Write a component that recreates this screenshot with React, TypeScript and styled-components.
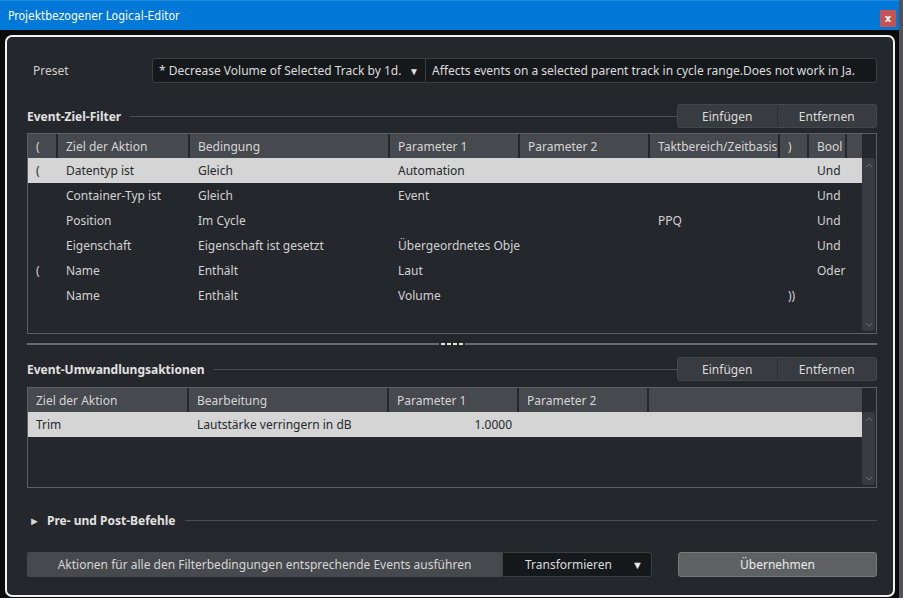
import React from "react";
import styled, { createGlobalStyle } from "styled-components";

const GlobalStyle = createGlobalStyle`
  html, body {
    margin: 0;
    padding: 0;
    background: #4f5358;
  }
  body {
    font-family: "Noto Sans", "Open Sans", sans-serif;
    font-size: 12px;
    color: #d2d2d2;
  }
`;

const filterCols = [30, 132, 200, 130, 130, 130, 29, 38, 15];
const actionCols = [161, 200, 130, 130, 213];

const filterHeader = ["(", "Ziel der Aktion", "Bedingung", "Parameter 1", "Parameter 2", "Taktbereich/Zeitbasis", ")", "Bool", ""];
const filterRows = [
  ["(", "Datentyp ist", "Gleich", "Automation", "", "", "", "Und", ""],
  ["", "Container-Typ ist", "Gleich", "Event", "", "", "", "Und", ""],
  ["", "Position", "Im Cycle", "", "", "PPQ", "", "Und", ""],
  ["", "Eigenschaft", "Eigenschaft ist gesetzt", "Übergeordnetes Objekt", "", "", "", "Und", ""],
  ["(", "Name", "Enthält", "Laut", "", "", "", "Oder", ""],
  ["", "Name", "Enthält", "Volume", "", "", "))", "", ""],
  ["", "", "", "", "", "", "", "", ""],
];

const actionHeader = ["Ziel der Aktion", "Bearbeitung", "Parameter 1", "Parameter 2", ""];
const actionRows = [
  ["Trim", "Lautstärke verringern in dB", "1.0000", "", ""],
  ["", "", "", "", ""],
  ["", "", "", "", ""],
];

function Chevron({ up }: { up?: boolean }) {
  return (
    <svg width="8" height="5" viewBox="0 0 8 5">
      <path d={up ? "M1 4 L4 1 L7 4" : "M1 1 L4 4 L7 1"} stroke="#6d7074" strokeWidth="1" fill="none" />
    </svg>
  );
}

function DataTable({
  cols,
  header,
  rows,
  selected,
  alignRight = [],
}: {
  cols: number[];
  header: string[];
  rows: string[][];
  selected: number;
  alignRight?: number[];
}) {
  const template = cols.map((c) => `${c}px`).join(" ");
  return (
    <TableFrame>
      <TableGrid>
        <Row $cols={template}>
          {header.map((h, i) => (
            <HeadCell key={i} $last={i === header.length - 1}>
              {h}
            </HeadCell>
          ))}
        </Row>
        {rows.map((r, ri) => (
          <Row key={ri} $cols={template} $selected={ri === selected}>
            {r.map((c, ci) => (
              <Cell key={ci} $right={alignRight.includes(ci)}>
                {c}
              </Cell>
            ))}
          </Row>
        ))}
      </TableGrid>
      <ScrollColumn>
        <ScrollHead />
        <ScrollTrack>
          <Chevron up />
          <Chevron />
        </ScrollTrack>
      </ScrollColumn>
    </TableFrame>
  );
}

function SectionHeader({ title }: { title: string }) {
  return (
    <SectionRow>
      <SectionTitle>{title}</SectionTitle>
      <SectionLine />
      <ButtonGroup>
        <GroupButton>Einfügen</GroupButton>
        <GroupButton>Entfernen</GroupButton>
      </ButtonGroup>
    </SectionRow>
  );
}

export default function App() {
  return (
    <Screen>
      <GlobalStyle />
      <Window>
        <TitleBar>
          <TitleText>Projektbezogener Logical-Editor</TitleText>
          <CloseButton>x</CloseButton>
        </TitleBar>
        <Body>
          <Panel>
            <PresetRow>
              <PresetLabel>Preset</PresetLabel>
              <PresetSelect>
                <span>* Decrease Volume of Selected Track by 1d.</span>
                <Arrow>▼</Arrow>
              </PresetSelect>
              <PresetInfo>Affects events on a selected parent track in cycle range.Does not work in Ja.</PresetInfo>
            </PresetRow>

            <Block $top={21}>
              <SectionHeader title="Event-Ziel-Filter" />
            </Block>
            <Block $top={5}>
              <DataTable cols={filterCols} header={filterHeader} rows={filterRows} selected={0} />
            </Block>

            <Splitter>
              <SplitLine />
              <Grip>
                <i />
                <i />
                <i />
                <i />
              </Grip>
              <SplitLine />
            </Splitter>

            <Block $top={11}>
              <SectionHeader title="Event-Umwandlungsaktionen" />
            </Block>
            <Block $top={6}>
              <DataTable cols={actionCols} header={actionHeader} rows={actionRows} selected={0} alignRight={[2]} />
            </Block>

            <PrePostRow>
              <Triangle>►</Triangle>
              <SectionTitle>Pre- und Post-Befehle</SectionTitle>
              <SectionLine />
            </PrePostRow>

            <BottomRow>
              <ActionLabel>Aktionen für alle den Filterbedingungen entsprechende Events ausführen</ActionLabel>
              <ModeSelect>
                <span>Transformieren</span>
                <ModeArrow>▼</ModeArrow>
              </ModeSelect>
              <ApplyButton>Übernehmen</ApplyButton>
            </BottomRow>
          </Panel>
        </Body>
      </Window>
    </Screen>
  );
}

const Screen = styled.div`
  width: 903px;
  height: 598px;
  display: flex;
  overflow: hidden;
  background: #4f5358;
`;

const Window = styled.div`
  width: 899px;
  height: 598px;
  display: flex;
  flex-direction: column;
  background: #0b0b0c;
`;

const TitleBar = styled.div`
  height: 30px;
  flex: none;
  box-sizing: border-box;
  background: #0078d7;
  border-top: 1px solid #1e88e0;
  display: flex;
  align-items: center;
  justify-content: space-between;
  padding: 0 3px 0 8px;
`;

const TitleText = styled.div`
  font-family: "DejaVu Sans Condensed", "DejaVu Sans", sans-serif;
  font-stretch: condensed;
  font-size: 12px;
  color: #ffffff;
  margin-top: 1px;
`;

const CloseButton = styled.div`
  width: 16px;
  height: 17px;
  margin-top: 5px;
  background: #c75252;
  color: #ffffff;
  font-family: "DejaVu Sans", sans-serif;
  font-size: 10px;
  font-weight: bold;
  display: flex;
  align-items: center;
  justify-content: center;
`;

const Body = styled.div`
  flex: 1;
  padding: 5px 4px 1px 5px;
  display: flex;
`;

const Panel = styled.div`
  flex: 1;
  box-sizing: border-box;
  border: 2px solid #f2f2f2;
  border-radius: 7px;
  background: #24272b;
  padding: 21px 16px 0 20px;
  display: flex;
  flex-direction: column;
`;

const PresetRow = styled.div`
  height: 25px;
  display: flex;
  align-items: stretch;
`;

const PresetLabel = styled.div`
  width: 125px;
  box-sizing: border-box;
  padding-left: 6px;
  display: flex;
  align-items: center;
  color: #cfcfcf;
`;

const Field = styled.div`
  box-sizing: border-box;
  background: #16191c;
  border: 1px solid #3b3e42;
  display: flex;
  align-items: center;
  color: #dcdcdc;
  white-space: nowrap;
  overflow: hidden;
`;

const PresetSelect = styled(Field)`
  width: 274px;
  border-radius: 3px 0 0 3px;
  padding: 0 6px;
  justify-content: space-between;
`;

const Arrow = styled.span`
  font-size: 10px;
  color: #e0e0e0;
`;

const PresetInfo = styled(Field)`
  flex: 1;
  border-left: none;
  border-radius: 0 3px 3px 0;
  padding: 0 6px;
`;

const Block = styled.div<{ $top: number }>`
  margin-top: ${(p) => p.$top}px;
`;

const SectionRow = styled.div`
  height: 24px;
  display: flex;
  align-items: center;
`;

const SectionTitle = styled.div`
  font-weight: bold;
  color: #e2e2e2;
  white-space: nowrap;
`;

const SectionLine = styled.div`
  flex: 1;
  height: 1px;
  background: #4b4e52;
  margin-left: 9px;
`;

const ButtonGroup = styled.div`
  width: 200px;
  height: 24px;
  display: flex;
  box-sizing: border-box;
  border: 1px solid #44474b;
  border-radius: 3px;
  background: #383b3f;
  overflow: hidden;
`;

const GroupButton = styled.div`
  flex: 1;
  display: flex;
  align-items: center;
  justify-content: center;
  color: #dcdcdc;
  & + & {
    border-left: 1px solid #2b2e31;
  }
`;

const TableFrame = styled.div`
  display: flex;
  border: 1px solid #5c5f63;
  background: #24272b;
`;

const TableGrid = styled.div`
  display: flex;
  flex-direction: column;
`;

const Row = styled.div<{ $cols: string; $selected?: boolean }>`
  display: grid;
  grid-template-columns: ${(p) => p.$cols};
  height: 25px;
  background: ${(p) => (p.$selected ? "#d5d5d5" : "transparent")};
  color: ${(p) => (p.$selected ? "#26292c" : "#d2d2d2")};
  &:first-child {
    height: 24px;
  }
`;

const HeadCell = styled.div<{ $last?: boolean }>`
  background: #46494d;
  border-right: ${(p) => (p.$last ? "none" : "2px solid #24272b")};
  color: #d6d6d6;
  padding-left: 8px;
  display: flex;
  align-items: center;
  white-space: nowrap;
  overflow: hidden;
`;

const Cell = styled.div<{ $right?: boolean }>`
  padding: 0 ${(p) => (p.$right ? "7px" : "0")} 0 8px;
  display: flex;
  align-items: center;
  justify-content: ${(p) => (p.$right ? "flex-end" : "flex-start")};
  white-space: nowrap;
  overflow: hidden;
`;

const ScrollColumn = styled.div`
  width: 14px;
  display: flex;
  flex-direction: column;
`;

const ScrollHead = styled.div`
  height: 24px;
  flex: none;
`;

const ScrollTrack = styled.div`
  flex: 1;
  margin: 0 1px 2px 0;
  border-radius: 3px;
  background: #383b3f;
  display: flex;
  flex-direction: column;
  align-items: center;
  justify-content: space-between;
  padding: 5px 0 4px;
`;

const Splitter = styled.div`
  margin-top: 8px;
  height: 4px;
  display: flex;
  align-items: center;
`;

const SplitLine = styled.div`
  flex: 1;
  height: 2px;
  background: #6a6d70;
`;

const Grip = styled.div`
  display: flex;
  gap: 2px;
  margin: 0 2px;
  & > i {
    width: 4px;
    height: 2px;
    background: #e4e4e4;
  }
`;

const PrePostRow = styled.div`
  margin-top: 24px;
  height: 16px;
  display: flex;
  align-items: center;
`;

const Triangle = styled.span`
  font-size: 11px;
  color: #d8d8d8;
  width: 20px;
  padding-left: 2px;
  box-sizing: border-box;
`;

const BottomRow = styled.div`
  margin-top: 24px;
  height: 25px;
  display: flex;
`;

const ActionLabel = styled.div`
  width: 475px;
  background: #46494d;
  border-radius: 2px 0 0 2px;
  display: flex;
  align-items: center;
  justify-content: center;
  color: #d6d6d6;
  white-space: nowrap;
`;

const ModeSelect = styled(Field)`
  width: 150px;
  border-radius: 0 3px 3px 0;
  padding: 0 8px 0 22px;
  justify-content: space-between;
`;

const ModeArrow = styled.span`
  font-size: 11px;
  color: #e6e6e6;
`;

const ApplyButton = styled.div`
  margin-left: 26px;
  flex: 1;
  box-sizing: border-box;
  background: #5e6164;
  border: 1px solid #77797c;
  border-radius: 3px;
  display: flex;
  align-items: center;
  justify-content: center;
  color: #ececec;
`;
